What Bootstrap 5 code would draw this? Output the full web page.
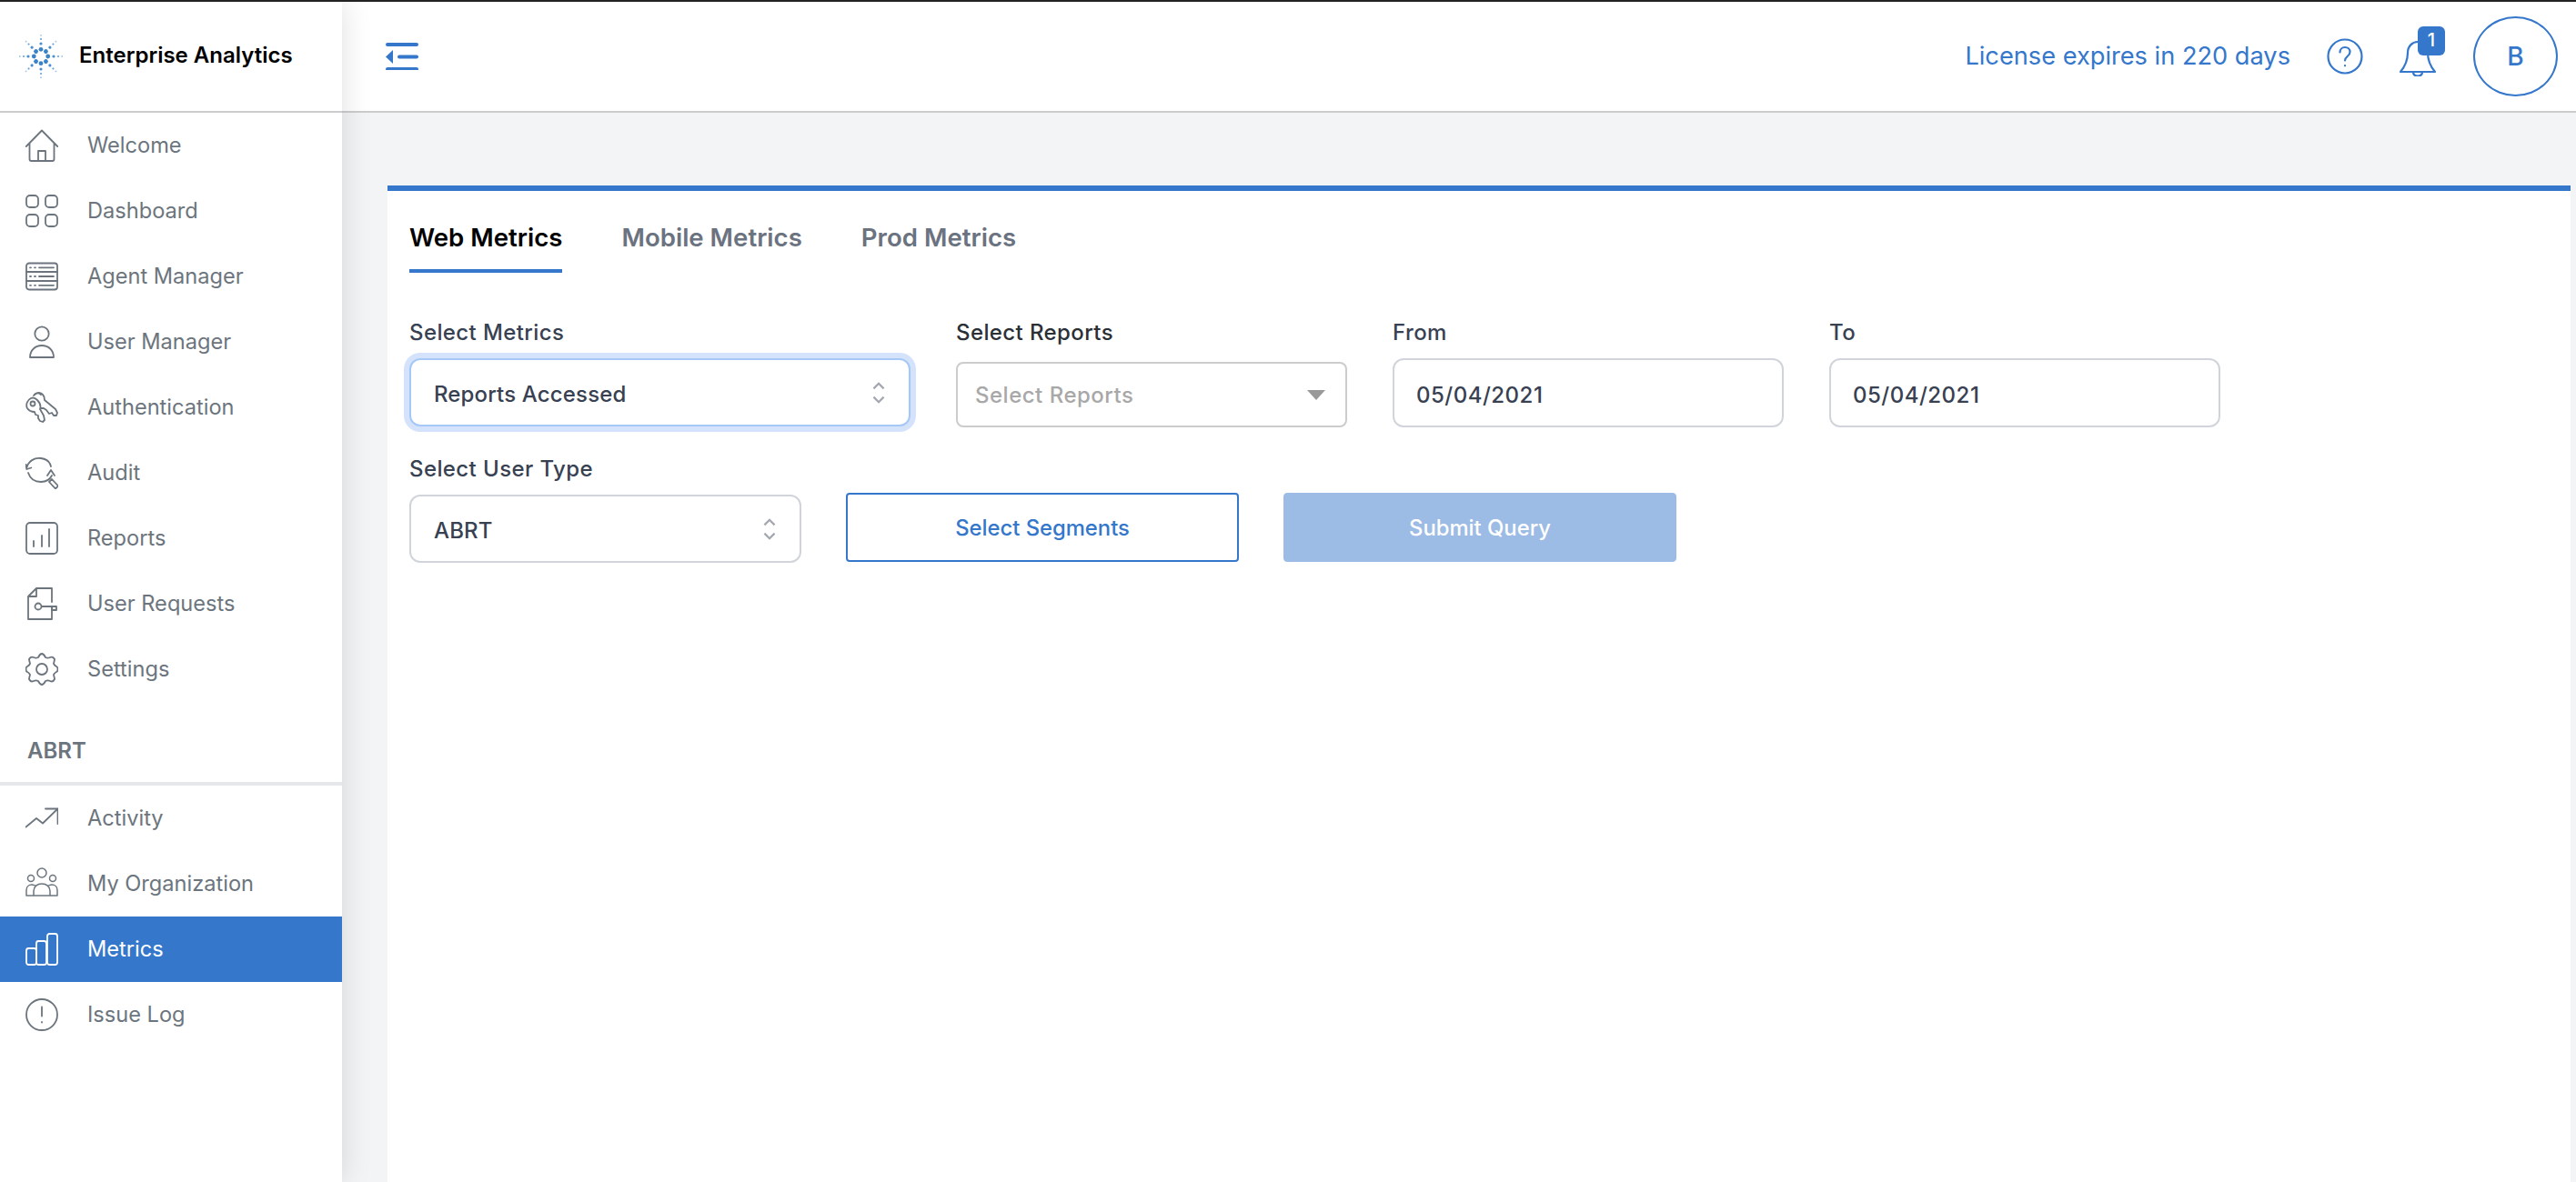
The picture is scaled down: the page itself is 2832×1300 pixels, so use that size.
<!DOCTYPE html>
<html lang="en">
<head>
<meta charset="utf-8">
<title>Enterprise Analytics</title>
<link href="https://cdn.jsdelivr.net/npm/bootstrap@5.3.0/dist/css/bootstrap.min.css" rel="stylesheet">
<style>
html,body{height:100%;}
body{font-family:Inter,"Liberation Sans",sans-serif;background:#f3f4f6;border-top:2px solid #222;overflow:hidden;color:#374151;}
.app-shell{height:1298px;}
.app-side{width:376px;flex:0 0 376px;background:#fff;box-shadow:0 0 32px rgba(0,0,0,.13);position:relative;z-index:2;}
.side-brand{height:122px;border-bottom:2px solid #ccc;padding-left:20px;gap:17px;font-size:24px;font-weight:600;color:#000;}
.side-brand span{position:relative;top:-1px;}
.side-link{height:72px;padding:0 0 0 28px;gap:32px;font-size:23.6px;color:#6c757d;display:flex;align-items:center;text-decoration:none;}
.side-link svg{flex:0 0 36px;fill:none;stroke:#6c757d;stroke-width:1.8;stroke-linecap:round;stroke-linejoin:round;}
.side-link.is-on{background:#3477cb;color:#fff;}
.side-link.is-on svg{stroke:#fff;}
.side-group{height:92px;border-bottom:4px solid #e5e7eb;padding:35px 0 0 30px;font-size:24px;font-weight:600;color:#6c757d;line-height:38px;}
.top-head{height:122px;flex:0 0 122px;background:#fff;border-bottom:2px solid #ccc;padding:0 20px 0 48px;}
.top-tools{gap:40px;color:#3477cb;font-size:27.2px;}
.tool-bell{width:40px;height:40px;}
.bell-count{position:absolute;left:20px;top:-13px;width:30px;height:32px;border-radius:6px;background:#3477cb;color:#fff;font-size:20px;font-weight:500;line-height:30px;text-align:center;}
.user-disc{width:93px;height:88px;border:2px solid #3477cb;border-radius:50%;font-size:28px;font-weight:500;color:#3477cb;margin-left:1px;}
.main-zone{padding:80px 6px 0 50px;}
.tab-panel{background:#fff;border-top:6px solid #3477cb;padding:34px 24px 0;}
.tab-row{gap:65px;}
.tab-row .nav-link{padding:0 0 18px;font-size:27.6px;line-height:34px;font-weight:600;color:#6b7280;border-bottom:4px solid transparent;}
.tab-row .nav-link.active{color:#000;border-bottom-color:#3477cb;}
.form-line{gap:50px;margin-top:51px;height:119px;}
.form-line.second{gap:49px;margin-top:31px;height:118px;}
.field-label{font-size:24px;line-height:30px;font-weight:500;letter-spacing:.4px;color:#374151;margin:0 0 13px;display:block;}
.field-label.dark{color:#2b2f36;}
.fld-w1{width:551px;}.fld-w2{width:430px;}.fld-w3{width:431px;}
.tab-panel .form-select,.tab-panel .form-control{font-size:24px;font-weight:500;color:#374151;height:76px;border:2px solid #d1d5db;border-radius:12px;padding:4px 50px 0 25px;background-color:#fff;box-shadow:none;letter-spacing:.5px;}
.tab-panel .form-select{letter-spacing:.15px;background-image:url("data:image/svg+xml,%3Csvg xmlns='http://www.w3.org/2000/svg' viewBox='0 0 16 28'%3E%3Cpath d='M2 9l6-6 6 6M2 19l6 6 6-6' fill='none' stroke='%23a3a8b0' stroke-width='2.4'/%3E%3C/svg%3E");background-size:16px 26px;background-position:right 25px center;}
.form-line.second .form-select{height:75px;}
.tab-panel .form-select.is-focus{height:75px;border-color:#a6c8f6;box-shadow:0 0 0 6px #d4e3fb;}
.tab-panel .form-select.is-fake{height:72px;margin-top:17px;border-color:#ccc;border-radius:8px;padding:2px 50px 0 19px;letter-spacing:.5px;color:#a8a8a8;background-image:url("data:image/svg+xml,%3Csvg xmlns='http://www.w3.org/2000/svg' viewBox='0 0 20 11'%3E%3Cpath d='M0 0h20l-10 11z' fill='%23999'/%3E%3C/svg%3E");background-size:20px 11px;background-position:right 22px center;}
.tab-panel .form-control{padding-left:24px;}
.act-btn{width:432px;height:76px;margin-bottom:1px;padding-top:8px;border-radius:4px;font-size:23.8px;font-weight:500;}
.act-line{--bs-btn-color:#3477cb;--bs-btn-border-color:#3477cb;--bs-btn-border-width:2px;background:#fff;}
.act-fill{--bs-btn-disabled-bg:#9cbbe5;--bs-btn-disabled-border-color:#9cbbe5;--bs-btn-disabled-color:#fff;--bs-btn-disabled-opacity:1;}
</style>
</head>
<body>
<div class="app-shell d-flex">
<aside class="app-side d-flex flex-column">
  <div class="side-brand d-flex align-items-center">
    <svg width="50" height="50" viewBox="-25 -25 50 50" aria-hidden="true">
      <defs><g id="spoke"><circle cx="0" cy="-7.7" r="2.4" fill="#3a83c9"/><circle cx="0" cy="-14" r="1.6" fill="#4a8fd0"/><circle cx="0" cy="-19" r="1.1" fill="#6aa3da"/><circle cx="0" cy="-23.2" r=".9" fill="#9cc3e8"/></g></defs>
      <use href="#spoke"/><use href="#spoke" transform="rotate(45)"/><use href="#spoke" transform="rotate(90)"/><use href="#spoke" transform="rotate(135)"/><use href="#spoke" transform="rotate(180)"/><use href="#spoke" transform="rotate(225)"/><use href="#spoke" transform="rotate(270)"/><use href="#spoke" transform="rotate(315)"/>
    </svg>
    <span>Enterprise Analytics</span>
  </div>
  <nav class="nav flex-column flex-nowrap">
    <a class="side-link" href="#"><svg width="36" height="36" viewBox="0 0 36 36"><path d="M.8 19 18 1.5 35.2 19M4.5 15.5V33a2 2 0 0 0 2 2h23a2 2 0 0 0 2-2V15.5M14 35V24h8v11"/></svg><span>Welcome</span></a>
    <a class="side-link" href="#"><svg width="36" height="36" viewBox="0 0 36 36"><rect x="1" y="1" width="13" height="13" rx="4"/><rect x="22" y="1" width="13" height="13" rx="4"/><rect x="1" y="22" width="13" height="13" rx="4"/><rect x="22" y="22" width="13" height="13" rx="4"/></svg><span>Dashboard</span></a>
    <a class="side-link" href="#"><svg width="36" height="36" viewBox="0 0 36 36"><rect x="1" y="3.500" width="34" height="29" rx="3"/><path d="M1 13h34M1 23h34M5 8.300h1M10 8.300h1M15 8.300h16M5 18h1M10 18h1M15 18h16M5 27.800h1M10 27.800h1M15 27.800h16"/></svg><span>Agent Manager</span></a>
    <a class="side-link" href="#"><svg width="36" height="36" viewBox="0 0 36 36"><circle cx="18" cy="9" r="7.700"/><path d="M5 35c0-8 6-13 13-13s13 5 13 13z"/></svg><span>User Manager</span></a>
    <a class="side-link" href="#"><svg width="36" height="36" viewBox="0 0 36 36"><path d="M9 5c3-4 8-4 10-1 2 2 2 4 2 6l12 10 2 4-1 3-3 0-2-3-3 1-3-4-3-2-3 0"/><path d="M6 8c-4 2-6 7-4 11 2 3 5 4 8 4l1 3 3 1 0 3 2 3 3 1 2-2-1-5-4-7c1-3 0-7-3-10-2-2-5-3-7-2z"/><circle cx="8" cy="14" r="2.500"/><path d="M10 4c2-2 5-2 7 0"/></svg><span>Authentication</span></a>
    <a class="side-link" href="#"><svg width="36" height="36" viewBox="0 0 36 36"><path d="M1 13C3 5 10 1 17 2c6 .8 10 4 11 9M.500 9l.8 5 5-1.500M29 21c-2 4-6 7-12 7-7 0-12-4-14-10M24 21l4-6 4 6"/><path d="M26 28l3-3 7 7.500-3 3z"/></svg><span>Audit</span></a>
    <a class="side-link" href="#"><svg width="36" height="36" viewBox="0 0 36 36"><rect x="1" y="1" width="34" height="34" rx="4"/><path d="M9 21v6M18 15v12M26 8v19"/></svg><span>Reports</span></a>
    <a class="side-link" href="#"><svg width="36" height="36" viewBox="0 0 36 36"><path d="M29 23v12H3V10l9-9h17v15M12 1v9H3"/><circle cx="14" cy="21" r="3.500"/><path d="M18 21h16v4h-5v-4"/></svg><span>User Requests</span></a>
    <a class="side-link" href="#"><svg width="36" height="36" viewBox="0 0 36 36"><circle cx="18" cy="18" r="6"/><path d="M18 1c2 0 3 2 4 4 2 1 3 1 5 0 2-1 4 0 5 2 0 2-1 4-1 5 1 2 1 2 3 3 2 1 2 5 0 6-2 1-2 1-3 3 0 1 1 3 1 5-1 2-3 3-5 2-2-1-3-1-5 0-1 2-2 4-4 4s-3-2-4-4c-2-1-3-1-5 0-2 1-4 0-5-2 0-2 1-4 1-5-1-2-1-2-3-3-2-1-2-5 0-6 2-1 2-1 3-3 0-1-1-3-1-5 1-2 3-3 5-2 2 1 3 1 5 0 1-2 2-4 4-4z"/></svg><span>Settings</span></a>
  </nav>
  <div class="side-group">ABRT</div>
  <nav class="nav flex-column flex-nowrap">
    <a class="side-link" href="#"><svg width="36" height="36" viewBox="0 0 36 36"><path d="M.5 27.500 12 18l7 5.500L35.500 7.500M22 7.500h13.500V24"/></svg><span>Activity</span></a>
    <a class="side-link" href="#"><svg width="36" height="36" viewBox="0 0 36 36"><circle cx="18" cy="6" r="5" stroke-width="1.500"/><circle cx="6" cy="12" r="3.500" stroke-width="1.500"/><circle cx="30" cy="12" r="3.500" stroke-width="1.500"/><path stroke-width="1.500" d="M1 31v-6c0-4 3-6 6-6 2 0 3 1 4 1M35 31v-6c0-4-3-6-6-6-2 0-3 1-4 1M9 31v-5c0-5 4-8 9-8s9 3 9 8v5M1 31h34"/></svg><span>My Organization</span></a>
    <a class="side-link is-on" href="#"><svg width="36" height="36" viewBox="0 0 36 36"><rect x="1" y="17" width="11" height="18" rx="2.500"/><rect x="12" y="9" width="11" height="26" rx="2.500"/><rect x="24" y="1" width="11" height="34" rx="2.500"/></svg><span>Metrics</span></a>
    <a class="side-link" href="#"><svg width="36" height="36" viewBox="0 0 36 36"><circle cx="18" cy="18" r="17"/><path d="M18 9.500v10M18 26v.5"/></svg><span>Issue Log</span></a>
  </nav>
</aside>
<div class="flex-grow-1 d-flex flex-column">
  <header class="top-head d-flex align-items-center justify-content-between">
    <svg width="36" height="30" viewBox="0 0 36 30" aria-hidden="true" fill="none" stroke="#3477cb" stroke-width="4" stroke-linecap="round"><path d="M2 2h32M15 15.500h19M2 29h32"/><path d="M0 15.500 8 8v15z" fill="#3477cb" stroke="none"/></svg>
    <div class="top-tools d-flex align-items-center">
      <span>License expires in 220 days</span>
      <svg width="40" height="40" viewBox="0 0 40 40" fill="none" stroke="#3477cb" stroke-width="2.200" stroke-linecap="round" aria-hidden="true"><circle cx="20" cy="20" r="18.500"/><path d="M14.500 15.500c0-3.500 2.500-5.500 5.500-5.500s5.500 2 5.500 5.200c0 4.800-5.500 4.800-5.500 9.300M20 30v.3"/></svg>
      <div class="tool-bell position-relative">
        <svg width="40" height="40" viewBox="0 0 40 40" fill="none" stroke="#3477cb" stroke-width="2.200" stroke-linejoin="round" aria-hidden="true"><path d="M9 14c0-7 5-12 11-12s11 5 11 12c0 9 3 15 8 21H1c5-6 8-12 8-21zM15 35c0 3 2 4.500 5 4.500s5-1.500 5-4.500"/></svg>
        <span class="bell-count">1</span>
      </div>
      <div class="user-disc d-flex align-items-center justify-content-center">B</div>
    </div>
  </header>
  <main class="main-zone flex-grow-1 d-flex flex-column">
    <section class="tab-panel flex-grow-1">
      <ul class="nav tab-row">
        <li class="nav-item"><a class="nav-link active" href="#">Web Metrics</a></li>
        <li class="nav-item"><a class="nav-link" href="#">Mobile Metrics</a></li>
        <li class="nav-item"><a class="nav-link" href="#">Prod Metrics</a></li>
      </ul>
      <div class="form-line d-flex align-items-start">
        <div class="fld-w1"><label class="field-label">Select Metrics</label><select class="form-select is-focus"><option>Reports Accessed</option></select></div>
        <div class="fld-w2"><label class="field-label dark">Select Reports</label><select class="form-select is-fake"><option>Select Reports</option></select></div>
        <div class="fld-w2"><label class="field-label">From</label><input class="form-control" type="text" value="05/04/2021"></div>
        <div class="fld-w2"><label class="field-label">To</label><input class="form-control" type="text" value="05/04/2021"></div>
      </div>
      <div class="form-line second d-flex align-items-end">
        <div class="fld-w3"><label class="field-label">Select User Type</label><select class="form-select"><option>ABRT</option></select></div>
        <button class="btn act-line act-btn" type="button">Select Segments</button>
        <button class="btn act-fill act-btn" type="button" disabled>Submit Query</button>
      </div>
    </section>
  </main>
</div>
</div>
<script src="https://cdn.jsdelivr.net/npm/bootstrap@5.3.0/dist/js/bootstrap.bundle.min.js"></script>
</body>
</html>
